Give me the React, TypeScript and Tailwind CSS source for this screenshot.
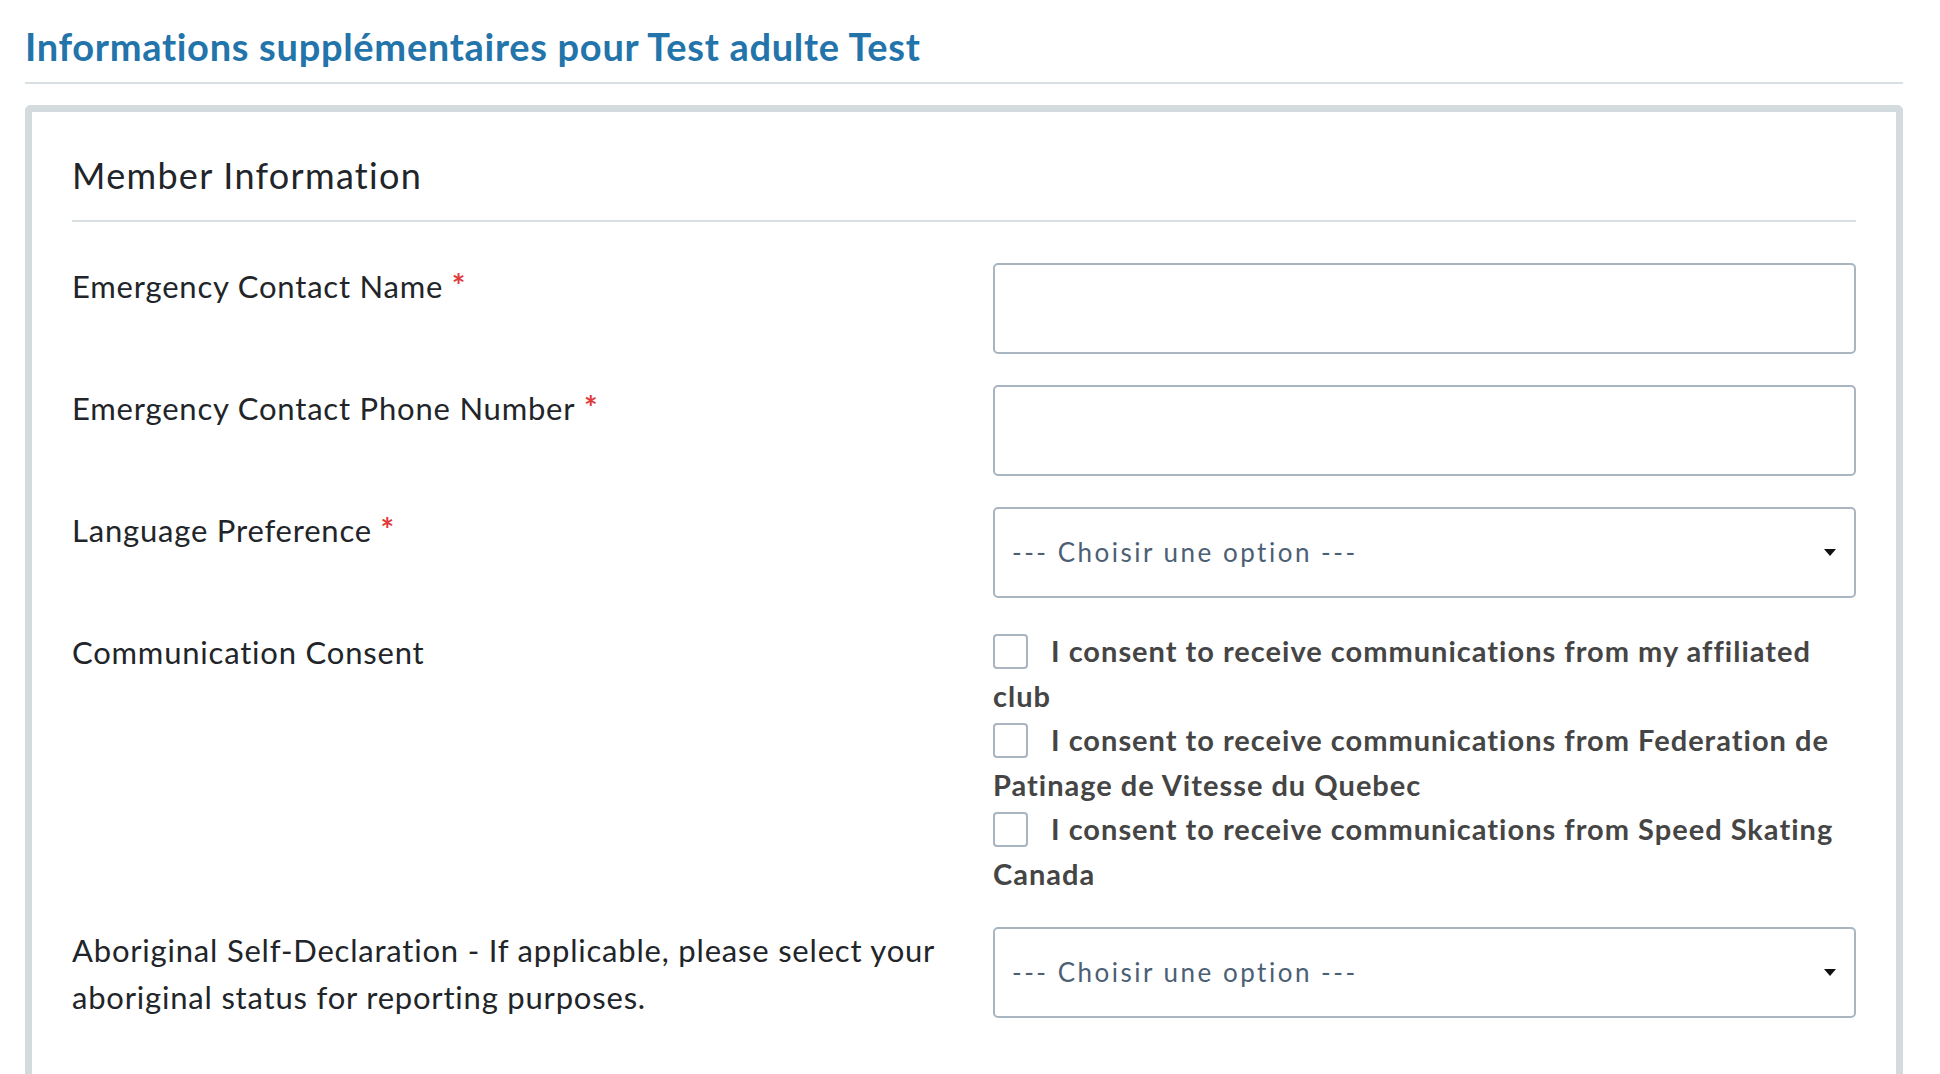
export default function App() {
  const labelCls = "text-[31px] leading-[46px] tracking-[0.8px] text-[#212529]";
  const req = <span className="text-[#e03a3a] font-bold text-[32px]"> *</span>;

  return (
    <div className="min-h-screen bg-white pl-[25px] pr-[37px] pt-[22px] font-[Lato,sans-serif]">
      <h1 className="text-[38px] leading-[48px] tracking-[0.7px] font-bold text-[#2274aa] pb-[12px] border-b-2 border-[#d8dfe3]">
        Informations supplémentaires pour Test adulte Test
      </h1>

      <div className="mt-[21px] border-[7px] border-b-0 border-[#d3dbdf] rounded-t-[6px] px-[40px] pt-[39px] pb-[80px]">
        <h2 className="text-[36px] leading-[48px] tracking-[1.3px] text-[#212529] pb-[21px] border-b-2 border-[#d8dfe3]">
          Member Information
        </h2>

        <div className="flex flex-col gap-[31px] pt-[41px]">
          <div className="grid grid-cols-[891px_863px] gap-x-[30px]">
            <label className={labelCls}>Emergency Contact Name{req}</label>
            <input className="h-[91px] border-2 border-[#a9b5c1] rounded-[5px] px-[17px] text-[25px] outline-none" />
          </div>

          <div className="grid grid-cols-[891px_863px] gap-x-[30px]">
            <label className={labelCls}>Emergency Contact Phone Number{req}</label>
            <input className="h-[91px] border-2 border-[#a9b5c1] rounded-[5px] px-[17px] text-[25px] outline-none" />
          </div>

          <div className="grid grid-cols-[891px_863px] gap-x-[30px]">
            <label className={labelCls}>Language Preference{req}</label>
            <Select />
          </div>

          <div className="grid grid-cols-[891px_863px] gap-x-[30px]">
            <label className={labelCls}>Communication Consent</label>
            <div className="flex flex-col">
              <Consent>
                I consent to receive communications from my affiliated
                <br />
                club
              </Consent>
              <Consent>
                I consent to receive communications from Federation de
                <br />
                Patinage de Vitesse du Quebec
              </Consent>
              <Consent>
                I consent to receive communications from Speed Skating
                <br />
                Canada
              </Consent>
            </div>
          </div>

          <div className="grid grid-cols-[891px_863px] gap-x-[30px]">
            <label className="text-[31px] leading-[47px] tracking-[0.8px] text-[#212529]">
              Aboriginal Self-Declaration - If applicable, please select your
              <br />
              aboriginal status for reporting purposes.
            </label>
            <Select />
          </div>
        </div>
      </div>
    </div>
  );
}

function Select() {
  return (
    <div className="relative h-[91px]">
      <select className="w-full h-full appearance-none bg-white border-2 border-[#a9b5c1] rounded-[5px] pl-[17px] pr-[40px] text-[26px] tracking-[2.5px] text-[#4b6074] font-[Lato,sans-serif] outline-none">
        <option>--- Choisir une option ---</option>
      </select>
      <svg
        className="absolute right-[20px] top-[42px] pointer-events-none"
        width="12"
        height="7"
        viewBox="0 0 12 7"
      >
        <path d="M0 0h12L6 7z" fill="#111" />
      </svg>
    </div>
  );
}

function Consent({ children }: { children: React.ReactNode }) {
  return (
    <label className="block text-[29px] leading-[44.5px] tracking-[1px] font-bold text-[#454545]">
      <span className="inline-block w-[35px] h-[35px] border-2 border-[#a9b5c1] rounded-[4px] bg-white mr-[23px] align-[-7px]" />
      {children}
    </label>
  );
}
